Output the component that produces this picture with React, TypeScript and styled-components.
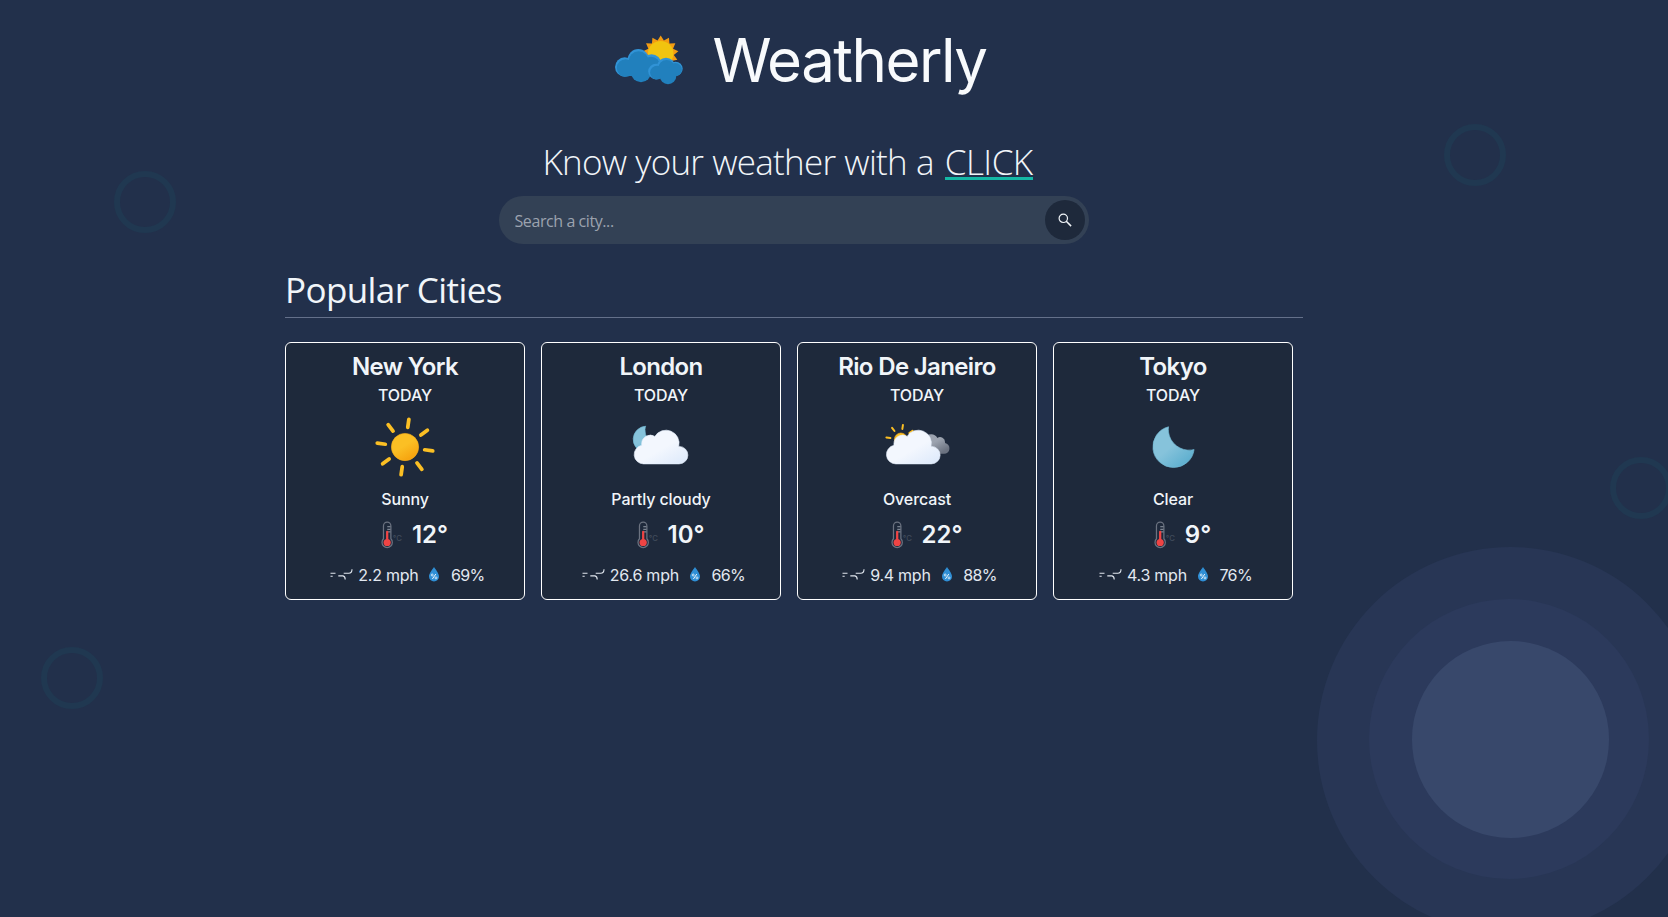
import React, { useId } from "react";
import styled, { createGlobalStyle } from "styled-components";

const Global = createGlobalStyle`
  *, *::before, *::after { box-sizing: border-box; }
  body {
    margin: 0;
    background: #22304b;
    color: #f1f5f9;
    font-family: Inter, "Liberation Sans", sans-serif;
    font-size: 16px;
    line-height: 24px;
    overflow: hidden;
  }
  h1, h2, h3, p { margin: 0; font-weight: inherit; }
  svg { display: block; flex: none; }
`;

const humanist = `"Open Sans", "Noto Sans", sans-serif`;

const Page = styled.div`
  position: relative;
  height: 917px;
  overflow: hidden;
`;

const Disc = styled.div<{ $x: number; $y: number; $r: number; $color: string }>`
  position: absolute;
  left: ${(p) => p.$x - p.$r}px;
  top: ${(p) => p.$y - p.$r}px;
  width: ${(p) => p.$r * 2}px;
  height: ${(p) => p.$r * 2}px;
  border-radius: 50%;
  background: ${(p) => p.$color};
`;

const Ring = styled.div<{ $x: number; $y: number }>`
  position: absolute;
  left: ${(p) => p.$x}px;
  top: ${(p) => p.$y}px;
  width: 62px;
  height: 62px;
  border: 6px solid #203851;
  border-radius: 50%;
`;

const Main = styled.main`
  position: relative;
  width: 1018px;
  margin-left: 285px;
  display: flex;
  flex-direction: column;
`;

const Brand = styled.header`
  display: flex;
  align-items: center;
  height: 60px;
  margin-top: 30px;
  padding-left: 329px;
`;

const BrandName = styled.h1`
  margin-left: 29.5px;
  font-size: 60px;
  line-height: 60px;
  letter-spacing: -1.5px;
  color: #f8fafc;
  white-space: nowrap;
`;

const Tagline = styled.h2`
  margin-top: 52px;
  padding-left: 257.5px;
  font-family: ${humanist};
  font-size: 35px;
  font-weight: 300;
  line-height: 40px;
  letter-spacing: -0.75px;
  word-spacing: 0.7px;
  white-space: nowrap;
`;

const Click = styled.span`
  display: inline-block;
  height: 38px;
  margin-left: 2px;
  border-bottom: 3px solid #14b8a6;
  letter-spacing: -0.55px;
`;

const SearchBar = styled.form`
  display: flex;
  align-items: center;
  width: 590px;
  height: 48px;
  margin: 14px 0 0 214px;
  padding: 0 4px 0 15.5px;
  border-radius: 24px;
  background: #334155;
`;

const SearchInput = styled.input`
  flex: 1;
  min-width: 0;
  padding: 2px 0 0;
  border: 0;
  outline: 0;
  background: transparent;
  color: #f1f5f9;
  font: 16px/24px ${humanist};
  letter-spacing: -0.42px;
  &::placeholder { color: #9ca3af; opacity: 1; }
`;

const SearchButton = styled.button`
  display: grid;
  place-items: center;
  width: 40px;
  height: 40px;
  padding: 0;
  border: 0;
  border-radius: 50%;
  background: #1e293b;
  color: #f1f5f9;
`;

const SectionTitle = styled.h2`
  height: 48px;
  margin-top: 26px;
  border-bottom: 1px solid #64708a;
  font-family: ${humanist};
  font-size: 35px;
  line-height: 40px;
  letter-spacing: -0.6px;
`;

const Cards = styled.div`
  display: grid;
  grid-template-columns: repeat(4, 240px);
  gap: 16px;
  margin-top: 24px;
`;

const Card = styled.article`
  display: flex;
  flex-direction: column;
  align-items: center;
  height: 258px;
  padding-top: 8px;
  border: 1px solid #fff;
  border-radius: 6px;
  background: #1e293b;
`;

const City = styled.h3`
  font-size: 24px;
  font-weight: 600;
  line-height: 32px;
  letter-spacing: -0.65px;
`;

const Label = styled.p`
  font-weight: 500;
  line-height: 24px;
  letter-spacing: -0.1px;
`;

const Picture = styled.div`
  height: 80px;
`;

const Temperature = styled.div`
  display: flex;
  align-items: center;
  height: 40px;
  margin: 4px 0 0 16px;
`;

const Degrees = styled.span`
  margin-left: 1px;
  font-size: 24px;
  font-weight: 600;
  line-height: 32px;
`;

const Details = styled.div`
  display: flex;
  align-items: center;
  gap: 4px;
  height: 24px;
  margin: 8px 0 0 5px;
  color: #e2e8f0;
  letter-spacing: -0.25px;
`;

const Humidity = styled.span`
  margin-left: 0.5px;
  letter-spacing: -0.6px;
`;

type Sky = "sunny" | "partly" | "overcast" | "clear";

const cities: { name: string; sky: Sky; text: string; temp: string; wind: string; humidity: string }[] = [
  { name: "New York", sky: "sunny", text: "Sunny", temp: "12°", wind: "2.2 mph", humidity: "69%" },
  { name: "London", sky: "partly", text: "Partly cloudy", temp: "10°", wind: "26.6 mph", humidity: "66%" },
  { name: "Rio De Janeiro", sky: "overcast", text: "Overcast", temp: "22°", wind: "9.4 mph", humidity: "88%" },
  { name: "Tokyo", sky: "clear", text: "Clear", temp: "9°", wind: "4.3 mph", humidity: "76%" },
];

const rayAngles = [8, 53, 98, 143, 188, 233, 278, 323];

const logoRays = Array.from({ length: 26 }, (_, i) => {
  const a = (i * Math.PI) / 13 - Math.PI / 2;
  const r = i % 2 ? 13.2 : 17.8;
  return `${(46.7 + r * Math.cos(a)).toFixed(2)},${(23.4 + r * Math.sin(a)).toFixed(2)}`;
}).join(" ");

function Logo() {
  return (
    <svg width="69" height="60" viewBox="0 0 69 60">
      <polygon points={logoRays} fill="#f39c12" />
      <circle cx="46.7" cy="23.6" r="12.7" fill="#f1c40f" />
      <g fill="#3193d6">
        <circle cx="10.7" cy="37" r="9.7" />
        <circle cx="24.3" cy="29.7" r="10.7" />
        <circle cx="37.5" cy="34" r="9.8" />
      </g>
      <g fill="#2180bd">
        <circle cx="11.6" cy="38" r="8.8" />
        <circle cx="24.6" cy="31.3" r="10" />
        <circle cx="37" cy="36" r="9.3" />
        <circle cx="27" cy="42.2" r="10.1" />
        <rect x="12" y="31" width="26" height="15" />
      </g>
      <g fill="#3193d6">
        <circle cx="42" cy="41.6" r="7.8" />
        <circle cx="52" cy="36.7" r="9" />
        <circle cx="61.6" cy="38.8" r="7.1" />
      </g>
      <g fill="#2180bd">
        <circle cx="43" cy="42.6" r="6.9" />
        <circle cx="52.6" cy="38.4" r="8.4" />
        <circle cx="61.4" cy="39.6" r="6.5" />
        <circle cx="54" cy="46" r="8.3" />
        <rect x="43" y="38" width="18" height="8" />
      </g>
    </svg>
  );
}

const cloudPath =
  "M46.5 31.5h-.32a10.49 10.49 0 0 0-19.11-8 7 7 0 0 0-10.57 6 7.21 7.21 0 0 0 .1 1.14A7.5 7.5 0 0 0 18 45.5h28.5a7 7 0 0 0 0-14z";
const rearCloudPath =
  "M34.23 33.45a4.05 4.05 0 0 0 4.05 4h16.51a4.34 4.34 0 0 0 .81-8.61 3.52 3.52 0 0 0 .06-.66 4.06 4.06 0 0 0-6.13-3.48 6.08 6.08 0 0 0-11.25 3.19 6.34 6.34 0 0 0 .18 1.46h-.18a4.05 4.05 0 0 0-4.05 4.1z";
const moonPath =
  "M46.66 36.2a16.66 16.66 0 0 1-16.78-16.55 16.29 16.29 0 0 1 .55-4.15A16.56 16.56 0 1 0 48.5 36.1c-.61.06-1.22.1-1.84.1z";
const smallMoonPath =
  "M29.33 26.68a10.61 10.61 0 0 1-10.68-10.54A10.5 10.5 0 0 1 19 13.5a10.54 10.54 0 1 0 11.5 13.11 11.48 11.48 0 0 1-1.17.07z";

function SkyIcon({ sky }: { sky: Sky }) {
  const id = useId();
  const sun = `${id}s`, cloud = `${id}c`, moon = `${id}m`, grey = `${id}g`;
  return (
    <svg width="80" height="80" viewBox="0 0 64 64">
      <defs>
        <linearGradient id={sun} x1=".2" y1="0" x2=".8" y2="1">
          <stop offset=".45" stopColor="#fbbf24" />
          <stop offset="1" stopColor="#f59e0b" />
        </linearGradient>
        <linearGradient id={cloud} gradientUnits="userSpaceOnUse" x1="22.56" y1="21.96" x2="39.2" y2="50.8">
          <stop offset=".45" stopColor="#f3f7fe" />
          <stop offset="1" stopColor="#deeafb" />
        </linearGradient>
        <linearGradient id={moon} x1=".2" y1=".1" x2=".75" y2=".95">
          <stop offset=".45" stopColor="#86c3db" />
          <stop offset="1" stopColor="#5eafcf" />
        </linearGradient>
        <linearGradient id={grey} gradientUnits="userSpaceOnUse" x1="41.45" y1="21.6" x2="50.9" y2="38">
          <stop offset=".45" stopColor="#9ca3af" />
          <stop offset="1" stopColor="#6b7280" />
        </linearGradient>
      </defs>
      {sky === "sunny" && (
        <g>
          <circle cx="32" cy="32" r="10.9" fill={`url(#${sun})`} stroke="#f8af18" strokeWidth=".5" />
          {rayAngles.map((a) => (
            <path key={a} d="M32 16.1V9.6" transform={`rotate(${a} 32 32)`} stroke="#fbbf24" strokeWidth="3" strokeLinecap="round" />
          ))}
        </g>
      )}
      {sky === "partly" && (
        <g>
          <path d={smallMoonPath} transform="translate(0 1.9) rotate(4 20 24)" fill={`url(#${moon})`} stroke="#72b9d5" strokeWidth=".5" />
          <path d={cloudPath} fill={`url(#${cloud})`} stroke="#e6effc" strokeWidth=".5" />
        </g>
      )}
      {sky === "overcast" && (
        <g>
          <circle cx="19.1" cy="26" r="5.2" fill={`url(#${sun})`} stroke="#f8af18" strokeWidth=".5" />
          {[8, 53, 278, 323].map((a) => (
            <path key={a} d="M19.1 17.5v-3.2" transform={`rotate(${a} 19.1 26)`} stroke="#fbbf24" strokeWidth="1.6" strokeLinecap="round" />
          ))}
          <path d={rearCloudPath} transform="translate(-1.2 0)" fill={`url(#${grey})`} />
          <path d={cloudPath} transform="translate(-3 0)" fill={`url(#${cloud})`} stroke="#e6effc" strokeWidth=".5" />
        </g>
      )}
      {sky === "clear" && (
        <path d={moonPath} transform="rotate(-7 32 32)" fill={`url(#${moon})`} stroke="#72b9d5" strokeWidth=".5" />
      )}
    </svg>
  );
}

const UnitText = styled.text`
  font: 500 7.5px Inter, sans-serif;
`;

function Thermometer() {
  return (
    <svg width="33" height="33" viewBox="0 0 32 32">
      <path d="M5.3 19.2V6.7a3.6 3.6 0 0 1 7.2 0v12.5a5 5 0 1 1-7.2 0Z" fill="none" stroke="#6b7280" strokeWidth="1.2" />
      <path d="M9 7.5h3M9 10h3M9 12.5h3" stroke="#9ca3af" strokeWidth=".9" />
      <path d="M8.9 12.5V23" stroke="#ef4444" strokeWidth="2.2" strokeLinecap="round" />
      <circle cx="8.9" cy="22.8" r="3.5" fill="#ef4444" />
      <UnitText x="14.4" y="21.3" fill="#414c5c">°C</UnitText>
    </svg>
  );
}

function WindIcon() {
  return (
    <svg width="24" height="24" viewBox="0 0 24 24" fill="none" stroke="#e2e8f0" strokeWidth="1.1">
      <path d="M.5 10.3h5M.5 13.3h2.2M8.3 12.9h4.7q2.2.3 2.2 3.6M13.7 10.3h5q3.3 0 3.3-4" />
    </svg>
  );
}

function Drop() {
  return (
    <svg width="24" height="24" viewBox="0 0 24 24">
      <path d="M12 4.1C10 7.1 7 10.9 7 13.4a5 5 0 0 0 10 0C17 10.9 14 7.1 12 4.1Z" fill="#2f8fd6" />
      <path d="M13.8 11l-3.4 5" stroke="#fff" strokeWidth=".9" />
      <circle cx="10.2" cy="12" r="1" fill="none" stroke="#fff" strokeWidth=".7" />
      <circle cx="14" cy="14.9" r="1" fill="none" stroke="#fff" strokeWidth=".7" />
    </svg>
  );
}

export default function App() {
  return (
    <Page>
      <Global />
      <Disc $x={1510.3} $y={740} $r={193.5} $color="#283655" />
      <Disc $x={1509} $y={739.2} $r={140} $color="#2c3a5c" />
      <Disc $x={1510.3} $y={739.6} $r={98.3} $color="#38486b" />
      <Ring $x={114} $y={171} />
      <Ring $x={1444} $y={124} />
      <Ring $x={1610} $y={457} />
      <Ring $x={41} $y={647} />
      <Main>
        <Brand>
          <Logo />
          <BrandName>Weatherly</BrandName>
        </Brand>
        <Tagline>
          Know your weather with a <Click>CLICK</Click>
        </Tagline>
        <SearchBar onSubmit={(e) => e.preventDefault()}>
          <SearchInput placeholder="Search a city..." />
          <SearchButton aria-label="Search">
            <svg width="14" height="14" viewBox="0 0 14 14" fill="none" stroke="currentColor" strokeWidth="1.2">
              <circle cx="5.3" cy="5.3" r="4.2" />
              <path d="M8.3 8.3l4.8 4.8" strokeWidth="1.5" />
            </svg>
          </SearchButton>
        </SearchBar>
        <SectionTitle>Popular Cities</SectionTitle>
        <Cards>
          {cities.map((c) => (
            <Card key={c.name}>
              <City>{c.name}</City>
              <Label>TODAY</Label>
              <Picture><SkyIcon sky={c.sky} /></Picture>
              <Label>{c.text}</Label>
              <Temperature>
                <Thermometer />
                <Degrees>{c.temp}</Degrees>
              </Temperature>
              <Details>
                <WindIcon />
                <span>{c.wind}</span>
                <Drop />
                <Humidity>{c.humidity}</Humidity>
              </Details>
            </Card>
          ))}
        </Cards>
      </Main>
    </Page>
  );
}
